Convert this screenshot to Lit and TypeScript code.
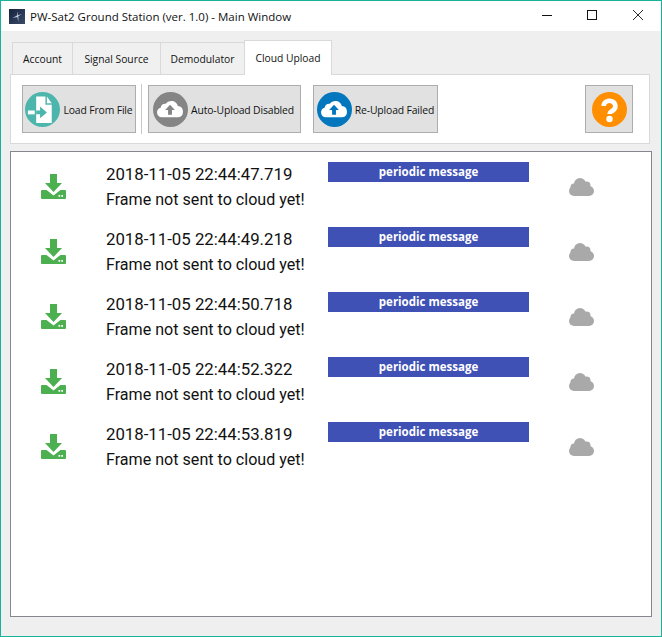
import { css, html, LitElement, svg } from "lit";
import { customElement } from "lit/decorators.js";

const rows = [
  "2018-11-05 22:44:47.719",
  "2018-11-05 22:44:49.218",
  "2018-11-05 22:44:50.718",
  "2018-11-05 22:44:52.322",
  "2018-11-05 22:44:53.819",
];

const cloudUp = (bg: string) => html`
  <svg class="round" viewBox="0 0 36 36">
    <circle cx="18" cy="18" r="18" fill=${bg}></circle>
    ${svg`<path fill="#fff" d="M9 26a5 5 0 0 1-1.200-9.800A5 5 0 0 1 13 12.200a7 7 0 0 1 12.500 2.300A5.800 5.800 0 0 1 26 26z"></path>
    <path fill=${bg} d="M17.500 13l5 5.500h-3v5h-4v-5h-3z"></path>`}
  </svg>
`;

@customElement("app-root")
export class AppRoot extends LitElement {
  render() {
    return html`
      <div class="window">
        <header class="title">
          <svg class="logo" viewBox="0 0 16 15">
            <defs>
              <linearGradient id="sky" x1="0" y1="0" x2="1" y2="1">
                <stop offset="0" stop-color="#16233f"></stop>
                <stop offset="1" stop-color="#3a4a68"></stop>
              </linearGradient>
            </defs>
            <rect width="16" height="15" fill="url(#sky)"></rect>
            <path d="M9 2.500 8 6.500 3.500 9l4.700-1 1.300 4.500L9.300 7.300 13 5l-4 1.300z" fill="#c4cedf"></path>
          </svg>
          <span class="title-text">PW-Sat2 Ground Station (ver. 1.0) - Main Window</span>
          <div class="controls">
            <svg viewBox="0 0 10 10"><path d="M0 5.500h10" stroke="#111" fill="none"></path></svg>
            <svg viewBox="0 0 10 10"><rect x=".5" y=".5" width="9" height="9" stroke="#111" fill="none"></rect></svg>
            <svg viewBox="0 0 10 10"><path d="M0 0l10 10M10 0L0 10" stroke="#111" stroke-width=".9" fill="none"></path></svg>
          </div>
        </header>
        <main class="body">
          <nav class="tabs">
            <span class="tab account">Account</span>
            <span class="tab signal">Signal Source</span>
            <span class="tab demod">Demodulator</span>
            <span class="tab active">Cloud Upload</span>
          </nav>
          <section class="panel">
            <button class="load">
              <svg class="round" viewBox="0 0 36 36">
                <circle cx="18" cy="18" r="18" fill="#4db6ac"></circle>
                <path fill="#fff" d="M11.500 4.500H21V13h6.500v19h-16z"></path>
                <path fill="#fff" d="M22.500 4.500l5 7h-5z"></path>
                <path fill="#4db6ac" d="M11.500 19h4v-4l7 6-7 6v-4h-4z"></path>
                <path fill="#fff" d="M3 19h7v4H3z"></path>
              </svg>
              <span>Load From File</span>
            </button>
            <i class="sep"></i>
            <button class="auto">${cloudUp("#858585")}<span>Auto-Upload Disabled</span></button>
            <button class="reupload">${cloudUp("#0277bd")}<span>Re-Upload Failed</span></button>
            <button class="help">
              <svg class="round" viewBox="0 0 36 36">
                <circle cx="18" cy="18" r="18" fill="#ff8f00"></circle>
                <path fill="none" stroke="#fff" stroke-width="4.800" d="M12 14.500a6 5.500 0 1 1 9.500 4.500c-2 1.400-3.500 1.800-3.500 3.500"></path>
                <circle cx="18" cy="27.800" r="3.300" fill="#fff"></circle>
              </svg>
            </button>
          </section>
          <section class="list">
            ${rows.map(
              (t) => html`
                <article class="row">
                  <svg class="dl" viewBox="0 0 25 25">
                    <path fill="#4caf50" d="M9 0h7v9h5l-8.500 9L4 9h5z"></path>
                    <path fill="#4caf50" d="M1 16h4.500l7 5.500 7-5.500H24q1 0 1 1v7q0 1-1 1H1q-1 0-1-1v-7q0-1 1-1z"></path>
                    <path fill="#fff" d="M17.500 21h1.700v1.700h-1.700zM20.300 21H22v1.700h-1.700z"></path>
                  </svg>
                  <div class="info">
                    <div class="stamp">${t}</div>
                    <div>Frame not sent to cloud yet!</div>
                  </div>
                  <div class="badge">periodic message</div>
                  <svg class="cloud" viewBox="0 0 25 18" fill="#a9a9a9">
                    <circle cx="11" cy="6" r="6"></circle>
                    <circle cx="17.500" cy="7.500" r="4"></circle>
                    <circle cx="5" cy="9" r="3.500"></circle>
                    <rect y="8" width="25" height="10" rx="5"></rect>
                  </svg>
                </article>
              `
            )}
          </section>
        </main>
      </div>
    `;
  }

  static styles = css`
    :host {
      display: block;
      width: 662px;
      height: 637px;
      font-family: "Open Sans", "Noto Sans", sans-serif;
      color: #111;
    }
    .window {
      box-sizing: border-box;
      width: 662px;
      height: 637px;
      border: 1px solid #17b39b;
      display: flex;
      flex-direction: column;
      background: #efefef;
    }
    .title {
      height: 30px;
      flex: none;
      background: #fff;
      display: flex;
      align-items: center;
      padding-left: 8px;
    }
    .logo {
      width: 16px;
      height: 15px;
    }
    .title-text {
      margin-left: 5px;
      font-size: 11.5px;
      white-space: nowrap;
    }
    .controls {
      margin-left: auto;
      display: flex;
      gap: 35px;
      padding-right: 18px;
      padding-bottom: 2px;
    }
    .controls svg {
      width: 10px;
      height: 10px;
    }
    .controls svg:last-child {
      margin-left: 1px;
    }
    .body {
      flex: 1;
      display: flex;
      flex-direction: column;
      padding: 9px 9px 20px;
      min-height: 0;
    }
    .tabs {
      display: flex;
      align-items: flex-end;
      height: 35px;
      padding-left: 2px;
      position: relative;
      z-index: 1;
      margin-bottom: -1px;
    }
    .tab {
      box-sizing: border-box;
      height: 33px;
      padding-top: 1px;
      background: #f0f0f0;
      border: 1px solid #d9d9d9;
      border-right: none;
      display: flex;
      align-items: center;
      justify-content: center;
      font-size: 10.3px;
      white-space: nowrap;
    }
    .account {
      width: 60px;
    }
    .signal {
      width: 88px;
    }
    .demod {
      width: 84px;
    }
    .tab.active {
      width: 88px;
      height: 35px;
      background: #fff;
      border: 1px solid #d9d9d9;
      border-bottom: none;
      padding: 0 0 1px;
    }
    .panel {
      box-sizing: border-box;
      height: 70px;
      width: 640px;
      flex: none;
      background: #fff;
      border: 1px solid #d9d9d9;
      display: flex;
      align-items: center;
      padding-left: 11px;
      padding-right: 16px;
    }
    button {
      box-sizing: border-box;
      height: 48px;
      flex: none;
      background: #e1e1e1;
      border: 1px solid #adadad;
      display: flex;
      align-items: center;
      justify-content: center;
      gap: 3px;
      padding: 0;
      font: inherit;
      font-size: 10.4px;
      color: #111;
      white-space: nowrap;
    }
    button span {
      letter-spacing: -0.15px;
      padding-top: 1px;
    }
    .load {
      width: 114px;
    }
    .auto {
      width: 153px;
      padding-right: 2px;
    }
    .round {
      width: 35px;
      height: 35px;
      flex: none;
    }
    .sep {
      width: 1px;
      height: 50px;
      background: #c8c8c8;
      margin: 0 6px 0 5px;
      flex: none;
    }
    .reupload {
      width: 125px;
      margin-left: 12px;
    }
    .help {
      width: 48px;
      margin-left: auto;
    }
    .list {
      box-sizing: border-box;
      flex: none;
      width: 642px;
      height: 466px;
      margin-top: 7px;
      background: #fff;
      border: 1px solid #85868e;
    }
    .row {
      height: 65px;
      display: grid;
      grid-template-columns: 95px 222px 201px 1fr;
    }
    .dl {
      width: 25px;
      height: 25px;
      margin: 22px 0 0 30px;
    }
    .info {
      padding-top: 9px;
      font-family: Roboto, "Open Sans", sans-serif;
      font-size: 16.1px;
      line-height: 26px;
      white-space: nowrap;
    }
    .stamp {
      font-size: 16.8px;
    }
    .badge {
      box-sizing: border-box;
      height: 20px;
      margin-top: 10px;
      background: #3f51b5;
      color: #fff;
      font-size: 11.5px;
      font-weight: 700;
      line-height: 20px;
      text-align: center;
    }
    .cloud {
      width: 25px;
      height: 18px;
      margin: 26px 0 0 40px;
    }
  `;
}
